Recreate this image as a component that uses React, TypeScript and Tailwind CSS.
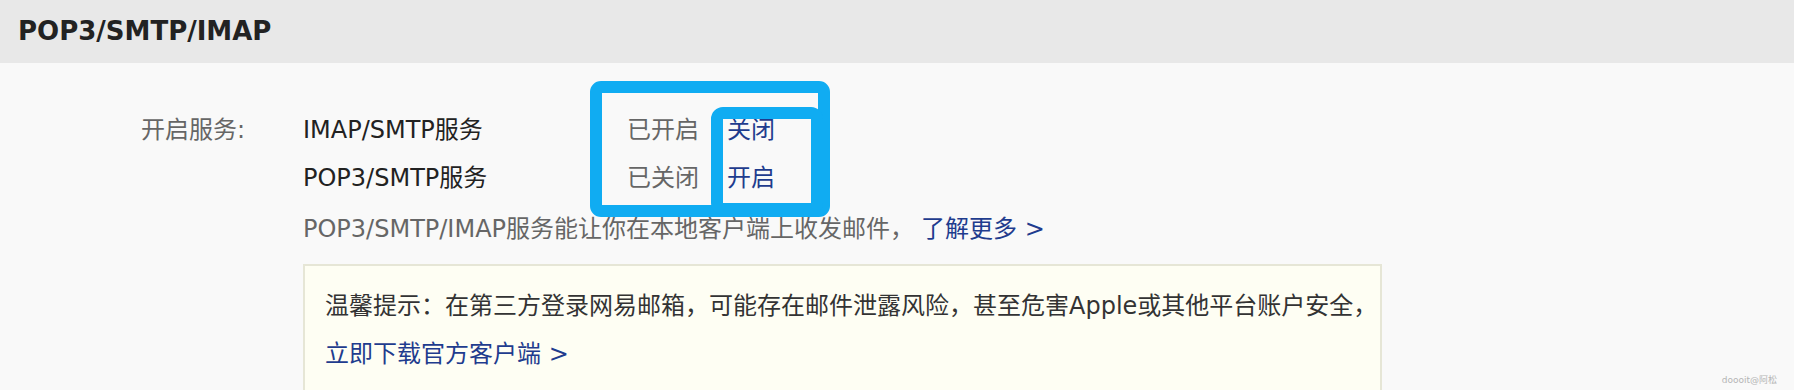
const BLUE_LINK = "text-[#1f3c8e]";

const services = [
  { name: "IMAP/SMTP服务", status: "已开启", action: "关闭" },
  { name: "POP3/SMTP服务", status: "已关闭", action: "开启" },
];

function ServiceRow({ name, status, action }: { name: string; status: string; action: string }) {
  return (
    <div className="flex h-[48px] items-center">
      <span className="w-[324px] text-[#222]">{name}</span>
      <span className="w-[100px] text-[#666]">{status}</span>
      <a className={`${BLUE_LINK} cursor-pointer`}>{action}</a>
    </div>
  );
}

export default function App() {
  return (
    <div className="relative h-[390px] w-[1794px] overflow-hidden bg-[#f9f9f9] font-['DejaVu_Sans','Noto_Sans_CJK_SC',sans-serif]">
      <div className="flex h-[63px] items-center bg-[#e8e8e8] pl-[18px] text-[26px] font-bold text-[#222]">
        POP3/SMTP/IMAP
      </div>

      <div className="flex pt-[43px] text-[24px]">
        <div className="w-[303px] pl-[141px] leading-[48px] text-[#666]">开启服务:</div>

        <div className="flex flex-col">
          {services.map((s) => (
            <ServiceRow key={s.name} {...s} />
          ))}

          <p className="mt-[3px] leading-[48px] text-[#666]">
            POP3/SMTP/IMAP服务能让你在本地客户端上收发邮件，
            <a className={`${BLUE_LINK} ml-[7px] cursor-pointer`}>了解更多 &gt;</a>
          </p>

          <div className="mt-[11px] h-[200px] w-[1079px] border-2 border-[#e6e6d6] bg-[#fefef3] px-[20px] pt-[16px] leading-[48px]">
            <p className="whitespace-nowrap text-justify text-[#333] [text-align-last:justify]">
              温馨提示：在第三方登录网易邮箱，可能存在邮件泄露风险，甚至危害Apple或其他平台账户安全，
            </p>
            <a className={`${BLUE_LINK} cursor-pointer`}>立即下载官方客户端 &gt;</a>
          </div>
        </div>
      </div>

      {/* annotation boxes drawn over the status / action columns */}
      <div className="pointer-events-none absolute left-[590px] top-[81px] h-[136px] w-[240px] rounded-[11px] border-[12px] border-[#10acf2]" />
      <div className="pointer-events-none absolute left-[711px] top-[107px] h-[108px] w-[112px] rounded-[12px] border-[12px] border-[#10acf2]" />

      <span className="absolute bottom-[3px] right-[17px] text-[9px] text-[#b5b5b5]">doooit@阿松</span>
    </div>
  );
}
